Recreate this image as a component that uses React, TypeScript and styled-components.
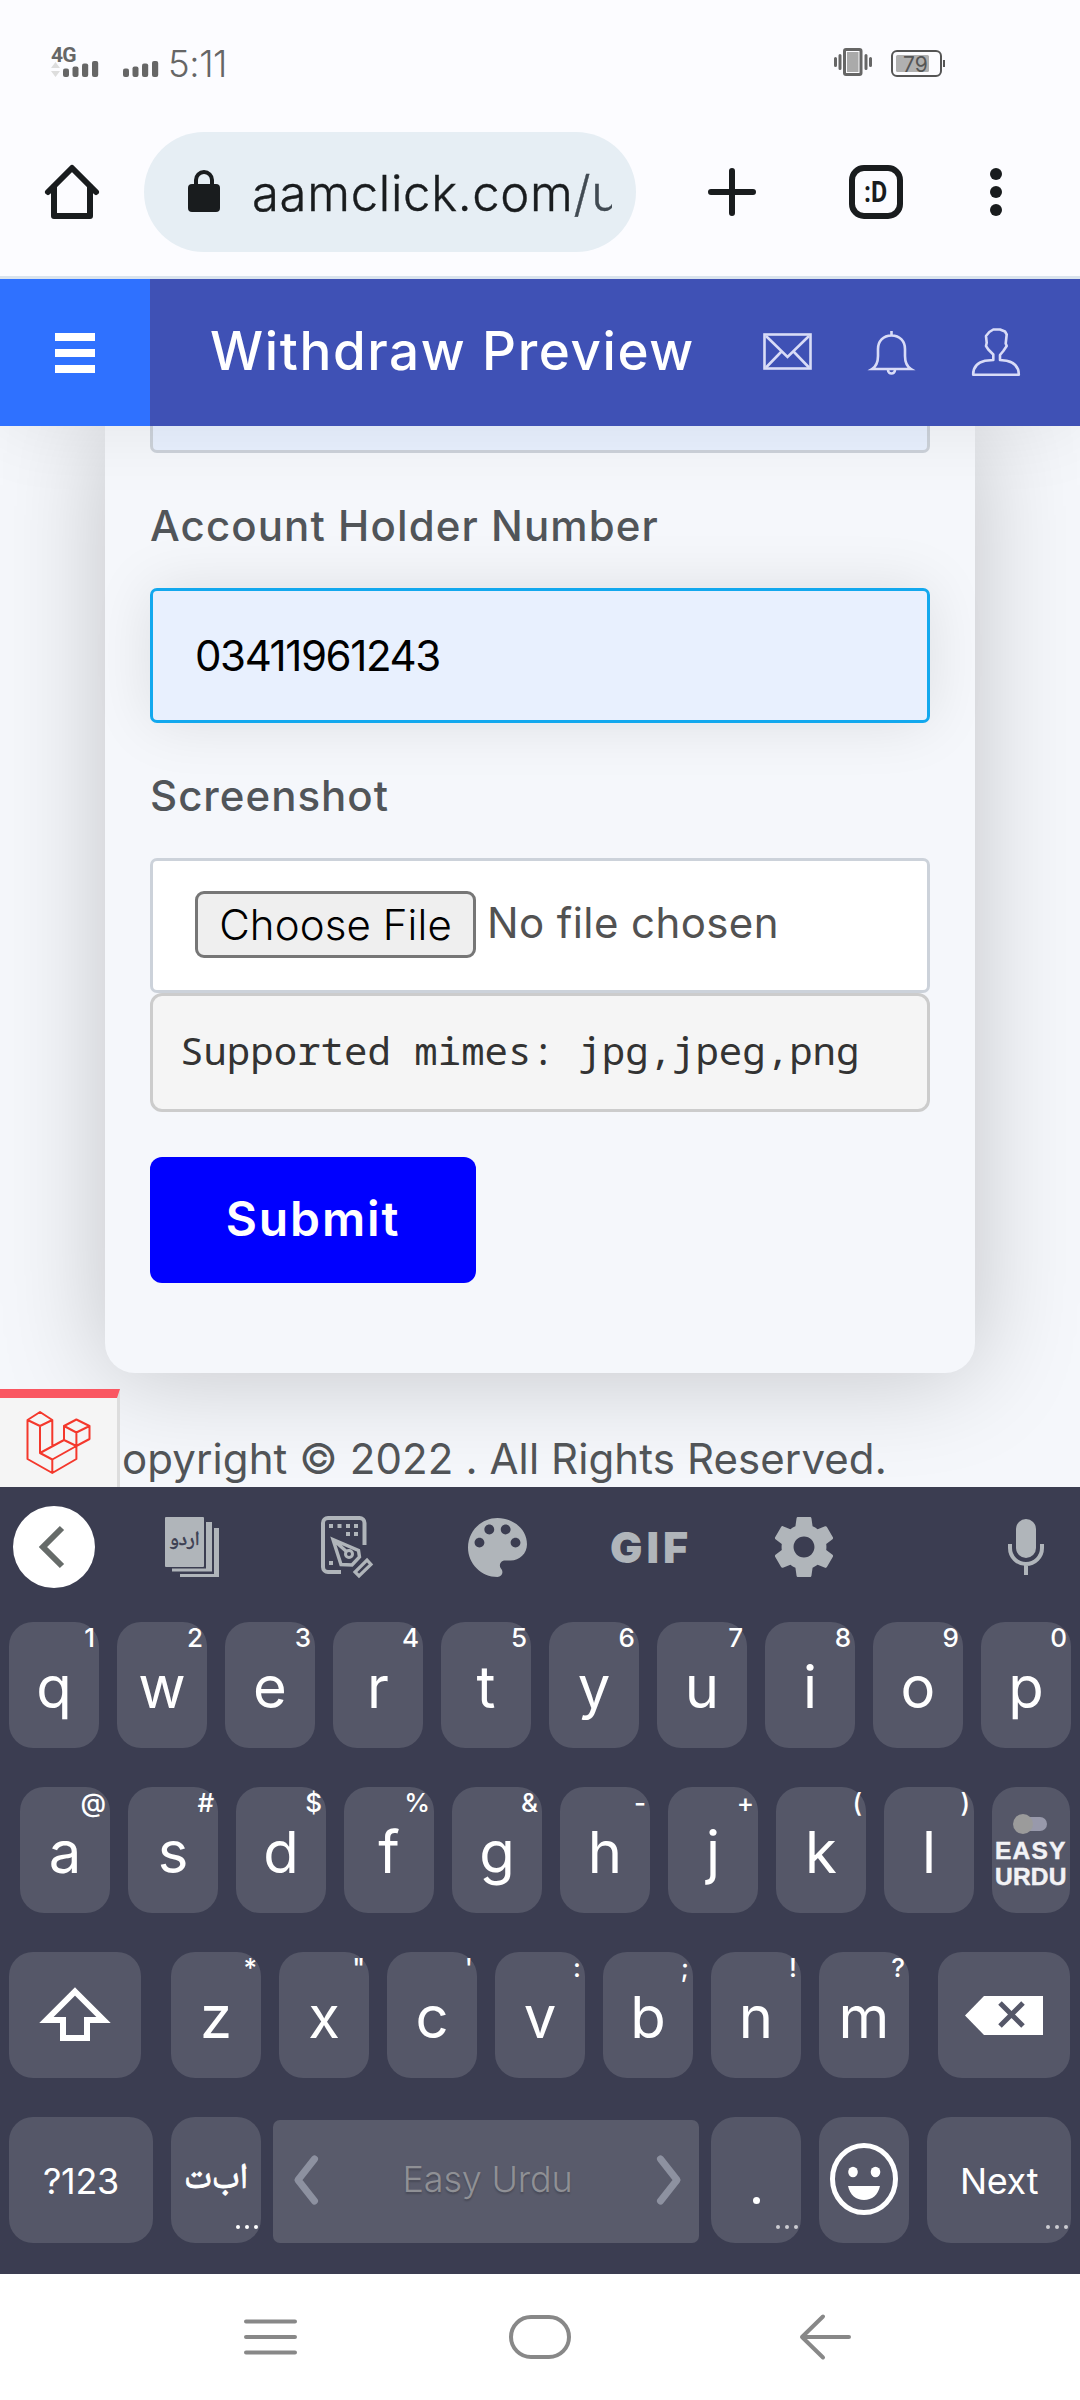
import React from "react";
import styled, { createGlobalStyle } from "styled-components";

const GlobalStyle = createGlobalStyle`
  * { box-sizing: border-box; }
  body { margin: 0; background: #fcfcff; font-family: Inter, "Noto Sans", sans-serif; }
  svg { display: block; flex: none; overflow: visible; }
`;

const sans = `Inter, Roboto, sans-serif`;

const Screen = styled.div`
  width: 1080px;
  height: 2400px;
  display: flex;
  flex-direction: column;
  overflow: hidden;
  font-family: ${sans};
`;

/* ---------- status bar ---------- */
const StatusBar = styled.div`
  height: 126px;
  flex: none;
  display: flex;
  align-items: flex-start;
  padding: 0 134px 0 51px;
  background: #fcfcff;
  color: #666;
  position: relative;
  z-index: 3;
`;
const Network = styled.div`
  width: 47px;
  padding-top: 47px;
  display: flex;
  flex-direction: column;
`;
const NetworkType = styled.span`
  font: 700 21px/17px Roboto, sans-serif;
  letter-spacing: -0.8px;
  height: 14px;
`;
const SecondSim = styled.div`
  margin: 61px 0 0 25px;
`;
const Clock = styled.span`
  margin: 44px auto 0 9px;
  font-size: 36.5px;
  line-height: 40px;
  font-weight: 300;
  letter-spacing: -0.4px;
`;
const Vibrate = styled.div`
  margin: 48px 19px 0 0;
`;
const Battery = styled.div`
  position: relative;
  margin-top: 50px;
  width: 55px;
  height: 27px;
`;
const BatteryLevel = styled.span`
  position: absolute;
  left: 12px;
  top: 3px;
  font-size: 21px;
  line-height: 24px;
  font-weight: 400;
  color: #555;
`;

/* ---------- browser bar ---------- */
const BrowserBar = styled.div`
  height: 153px;
  flex: none;
  display: flex;
  align-items: flex-start;
  padding: 6px 78px 0 45px;
  background: #fcfcff;
  border-bottom: 3px solid #d9e3ed;
  position: relative;
  z-index: 3;
  > svg { margin-top: 33px; }
`;
const Address = styled.div`
  width: 492px;
  height: 120px;
  margin: 0 72px 0 45px;
  border-radius: 60px;
  background: #e6eef4;
  display: flex;
  align-items: center;
  padding: 0 24px 0 44px;
  > svg { margin-top: -2px; }
`;
const Url = styled.div`
  margin: 3px 0 0 32px;
  width: 360px;
  font-size: 49px;
  line-height: 64px;
  font-weight: 300;
  color: #191c1e;
  white-space: nowrap;
  overflow: hidden;
  letter-spacing: 0.7px;
  -webkit-text-stroke: 0.4px currentColor;
  span { color: #414a52; }
`;
const TabCount = styled.div`
  width: 54px;
  height: 54px;
  margin: 33px 87px 0 93px;
  border: 6px solid #191c1e;
  border-radius: 15px;
  display: flex;
  align-items: center;
  justify-content: center;
  color: #191c1e;
  span {
    font: 700 29px/30px Roboto, sans-serif;
    transform: scaleX(0.86);
  }
`;

/* ---------- site header ---------- */
const Header = styled.header`
  height: 147px;
  flex: none;
  display: flex;
  align-items: center;
  background: #3f51b5;
  box-shadow: 0 0 80px rgba(0, 0, 0, 0.08);
  position: relative;
  z-index: 2;
`;
const MenuButton = styled.div`
  width: 150px;
  height: 147px;
  padding: 54px 0 0 55px;
  background: #2f71ff;
  display: flex;
  flex-direction: column;
  gap: 8px;
  i { width: 40px; height: 8px; background: #fff; }
`;
const Title = styled.h1`
  margin: 0 0 4px 60px;
  width: 553px;
  font-size: 53px;
  line-height: 60px;
  font-weight: 500;
  color: #fff;
  letter-spacing: 1.6px;
  white-space: nowrap;
`;
const HeaderIcons = styled.div`
  display: flex;
  align-items: center;
  color: #d9dcf7;
  svg:nth-child(1) { margin-bottom: 2px; }
  svg:nth-child(2) { margin: 0 59px 0 58px; }
  svg:nth-child(3) { margin-bottom: 2px; }
`;

/* ---------- page content ---------- */
const Content = styled.main`
  height: 1061px;
  flex: none;
  background: #f5f7fb;
  overflow: hidden;
  position: relative;
  display: flex;
  flex-direction: column;
`;
const Card = styled.section`
  width: 870px;
  height: 947px;
  flex: none;
  margin-left: 105px;
  padding: 0 45px;
  background: #f5f7fb;
  border-radius: 0 0 30px 30px;
  box-shadow: 0 0 105px rgba(0, 0, 0, 0.21);
  display: flex;
  flex-direction: column;
`;
const Field = styled.div<{ $focus?: boolean; $cut?: boolean; $fill: string }>`
  height: ${(p) => (p.$cut ? 27 : 135)}px;
  flex: none;
  display: flex;
  align-items: center;
  padding: 0 42px;
  border: 3px solid ${(p) => (p.$focus ? "#12a8ee" : "#ccd2da")};
  border-top-width: ${(p) => (p.$cut ? 0 : 3)}px;
  border-radius: ${(p) => (p.$cut ? "0 0 7px 7px" : "7px")};
  background: ${(p) => p.$fill};
  box-shadow: ${(p) => (p.$focus ? "0 0 60px rgba(0, 0, 0, 0.1)" : "none")};
  font-size: 42px;
  line-height: 60px;
  color: #000;
`;
const Label = styled.label<{ $track: number }>`
  height: 135px;
  flex: none;
  padding-top: 43px;
  font-size: 42px;
  line-height: 60px;
  font-weight: 500;
  color: #515559;
  letter-spacing: ${(p) => p.$track}px;
`;
const Digits = styled.span`
  letter-spacing: -1.4px;
`;
const ChooseFile = styled.button`
  width: 281px;
  height: 67px;
  flex: none;
  margin: 0 11px 2px 0;
  padding: 0;
  border: 3px solid #767676;
  border-radius: 9px;
  background: #efefef;
  font: 300 42px/60px ${sans};
  letter-spacing: 0.1px;
  color: #000;
  white-space: nowrap;
`;
const FileName = styled.span`
  color: #525252;
  margin-bottom: 5px;
  font-size: 42px;
  letter-spacing: 0.4px;
  white-space: nowrap;
`;
const Mimes = styled.pre`
  height: 119px;
  flex: none;
  margin: 0 0 45px;
  padding: 25px 27px;
  border: 3px solid #ccc;
  border-radius: 12px;
  background: #f5f5f5;
  color: #333;
  font: 39.05px/58px "Noto Sans Mono", "DejaVu Sans Mono", monospace;
`;
const Submit = styled.button`
  width: 326px;
  height: 126px;
  flex: none;
  padding: 0 0 3px;
  border: 0;
  border-radius: 12px;
  background: #00f;
  color: #fff;
  font: 600 48px/60px ${sans};
  letter-spacing: 1.9px;
`;
const FooterRow = styled.footer`
  display: flex;
  padding-top: 16px;
`;
const DebugBar = styled.div`
  width: 120px;
  height: 98px;
  padding: 14px 0 0 26px;
  border-top: 9px solid #fa5661;
  border-right: 3px solid #ddd;
  background: #f5f5f5;
`;
const Copyright = styled.span`
  margin: 40px 0 0 2px;
  font-size: 42px;
  line-height: 60px;
  letter-spacing: 0.1px;
  color: #515457;
  white-space: nowrap;
`;

/* ---------- keyboard ---------- */
const Keyboard = styled.div`
  height: 787px;
  flex: none;
  background: #3b3d51;
  color: #fff;
  position: relative;
`;
const Tools = styled.div`
  height: 120px;
  margin-bottom: 15px;
  display: flex;
  align-items: center;
  color: #b0b5ba;
`;
const Tool = styled.div<{ $gap: number; $w: number }>`
  width: ${(p) => p.$w}px;
  flex: none;
  margin-left: ${(p) => p.$gap}px;
  position: relative;
`;
const BackCircle = styled.div`
  width: 82px;
  height: 82px;
  border-radius: 50%;
  background: #fff;
  display: flex;
  align-items: center;
  padding-left: 26px;
`;
const DictWord = styled.span`
  position: absolute;
  left: 0;
  top: 7px;
  width: 39px;
  text-align: center;
  font: 400 20px/34px "Noto Naskh Arabic", "DejaVu Sans", sans-serif;
  -webkit-text-stroke: 0.6px currentColor;
  color: #3b3d51;
`;
const Gif = styled.span`
  display: block;
  font: 900 43px/58px ${sans};
  letter-spacing: 4px;
`;
const Row = styled.div<{ $left: number }>`
  height: 126px;
  margin-bottom: 39px;
  padding-left: ${(p) => p.$left}px;
  display: flex;
  align-items: flex-end;
  gap: 18px;
`;
const KeyCap = styled.div<{ $w?: number; $ml?: number; $small?: boolean; $lift?: number }>`
  position: relative;
  width: ${(p) => p.$w ?? 90}px;
  height: 126px;
  flex: none;
  margin-left: ${(p) => p.$ml ?? 0}px;
  padding-top: ${(p) => (p.$small ? 2 : 4)}px;
  padding-bottom: ${(p) => p.$lift ?? 0}px;
  border-radius: 24px;
  background: #555768;
  display: flex;
  flex-direction: column;
  align-items: center;
  justify-content: center;
  font-size: ${(p) => (p.$small ? 36 : 58)}px;
  font-weight: 400;
  line-height: 70px;
  letter-spacing: ${(p) => (p.$small ? -0.3 : 0)}px;
`;
const Hint = styled.span`
  position: absolute;
  right: 4px;
  top: 1px;
  font-size: 26px;
  line-height: 30px;
  font-weight: 500;
`;
const More = styled.div<{ $dim?: boolean }>`
  position: absolute;
  right: 3px;
  bottom: 14px;
  display: flex;
  gap: 5px;
  opacity: ${(p) => (p.$dim ? 0.7 : 1)};
  i { width: 4px; height: 4px; border-radius: 50%; background: #fff; }
`;
const Toggle = styled.div`
  width: 34px;
  height: 20px;
  margin: 2px 0 4px -2px;
  display: flex;
  align-items: center;
  &::before { content: ""; width: 20px; height: 20px; border-radius: 50%; background: #9b9b9b; z-index: 1; }
  &::after { content: ""; width: 22px; height: 14px; margin-left: -8px; border-radius: 0 7px 7px 0; background: #9899ab; }
`;
const Brand = styled.span<{ $track: number }>`
  width: 72px;
  font: 700 24.5px/26px "Liberation Sans", sans-serif;
  letter-spacing: ${(p) => p.$track}px;
  -webkit-text-stroke: 0.5px currentColor;
  white-space: nowrap;
  color: #f2f2f5;
`;
const Arabic = styled.span`
  font: 400 36px/44px "Noto Naskh Arabic", "DejaVu Sans", sans-serif;
  -webkit-text-stroke: 0.9px currentColor;
  margin-top: -3px;
  white-space: nowrap;
`;
const Space = styled.div`
  width: 426px;
  height: 123px;
  margin: 0 -6px;
  padding: 0 18px 3px 21px;
  border-radius: 7px;
  background: #595b6b;
  display: flex;
  align-items: center;
  justify-content: space-between;
  color: #8d91a0;
  span { margin-bottom: 2px; font-size: 36px; line-height: 44px; font-weight: 300; color: #8f9095; text-shadow: 0 2px 2px rgba(0,0,0,.2); letter-spacing: -0.2px; }
`;
const Dot = styled.i`
  width: 7px;
  height: 7px;
  margin-top: 37px;
  border-radius: 50%;
  background: #fff;
`;

/* ---------- navigation bar ---------- */
const NavBar = styled.nav`
  height: 126px;
  flex: none;
  background: #fff;
  display: flex;
  align-items: center;
  gap: 212px;
  padding-left: 244px;
  color: #888;
  svg:last-child { margin-left: 17px; }
`;

const Bars = () => (
  <svg width="36" height="16" fill="currentColor">
    <rect x="0" y="7.5" width="6" height="8.5" rx="2" />
    <rect x="9.5" y="5.5" width="6" height="10.5" rx="2" />
    <rect x="19" y="2.5" width="6.2" height="13.5" rx="2" />
    <rect x="29" y="0" width="6.2" height="16" rx="2" />
  </svg>
);

const LetterKey = ({ ch, hint, ml }: { ch: string; hint: string; ml?: number }) => (
  <KeyCap $ml={ml}>
    {ch}
    <Hint>{hint}</Hint>
  </KeyCap>
);

const Ellipsis = ({ dim }: { dim?: boolean }) => (
  <More $dim={dim}><i /><i /><i /></More>
);

const row1 = [["q", "1"], ["w", "2"], ["e", "3"], ["r", "4"], ["t", "5"], ["y", "6"], ["u", "7"], ["i", "8"], ["o", "9"], ["p", "0"]];
const row2 = [["a", "@"], ["s", "#"], ["d", "$"], ["f", "%"], ["g", "&"], ["h", "-"], ["j", "+"], ["k", "("], ["l", ")"]];
const row3 = [["z", "*"], ["x", '"'], ["c", "'"], ["v", ":"], ["b", ";"], ["n", "!"], ["m", "?"]];

export default function App() {
  return (
    <Screen>
      <GlobalStyle />
      <StatusBar>
        <Network>
          <NetworkType>4G</NetworkType>
          <svg width="47" height="16">
            <path d="M4.5 1 L9 7 H0Z M0 10 H9 L4.5 16Z" fill="#ddd" />
            <g transform="translate(12 0)"><Bars /></g>
          </svg>
        </Network>
        <SecondSim><Bars /></SecondSim>
        <Clock>5:11</Clock>
        <Vibrate>
          <svg width="38" height="28" stroke="#666" fill="none">
            <rect x="10.5" y="1.5" width="16.5" height="25" rx="1.5" strokeWidth="3" />
            <rect x="13" y="4" width="11.5" height="20" fill="#aaa" stroke="none" />
            <path d="M1.5 10.5v7M36.5 10.5v7" strokeWidth="3" strokeLinecap="round" />
            <path d="M6 7.5v13M32 7.5v13" strokeWidth="3" strokeLinecap="round" />
          </svg>
        </Vibrate>
        <Battery>
          <svg width="55" height="27" fill="none">
            <rect x="1" y="1" width="49" height="25" rx="5" stroke="#555" strokeWidth="2" />
            <rect x="5" y="5" width="33" height="17" rx="1.5" fill="#b0b0b0" />
            <path d="M53 10v7" stroke="#555" strokeWidth="2" />
          </svg>
          <BatteryLevel>79</BatteryLevel>
        </Battery>
      </StatusBar>

      <BrowserBar>
        <svg width="54" height="54" fill="none" stroke="#191c1e" strokeWidth="6" strokeLinecap="round" strokeLinejoin="round">
          <path d="M3 27 27 3 51 27" />
          <path d="M9 22V51H45V22" />
        </svg>
        <Address>
          <svg width="32" height="42">
            <rect y="14" width="32" height="28" rx="4" fill="#191c1e" />
            <path d="M8 16V10a8 8 0 0 1 16 0V16" fill="none" stroke="#191c1e" strokeWidth="4" />
          </svg>
          <Url>aamclick.com<span>/u</span></Url>
        </Address>
        <svg width="48" height="54" stroke="#191c1e" strokeWidth="6" strokeLinecap="round">
          <path d="M24 6V48M3 27H45" />
        </svg>
        <TabCount><span>:D</span></TabCount>
        <svg width="12" height="54" fill="#191c1e">
          <circle cx="6" cy="9" r="6" /><circle cx="6" cy="27" r="6" /><circle cx="6" cy="45" r="6" />
        </svg>
      </BrowserBar>

      <Header>
        <MenuButton><i /><i /><i /></MenuButton>
        <Title>Withdraw Preview</Title>
        <HeaderIcons>
          <svg width="49" height="37" fill="none" stroke="currentColor" strokeWidth="2.6">
            <rect x="1.5" y="1.5" width="46" height="34" />
            <path d="M3 3 24.5 24 46 3M3 34.5 18 19M46 34.5 31 19" />
          </svg>
          <svg width="43" height="44" fill="none" stroke="currentColor" strokeWidth="2.6">
            <path d="M21.5 4.5C13 4.5 8 10.5 8 18V25C8 32 6 35.5 2 38H41C37 35.5 35 32 35 25V18C35 10.5 30 4.5 21.5 4.5ZM21.5 0V4M18 39a3.5 3.5 0 0 0 7 0" />
          </svg>
          <svg width="48" height="48" fill="none" stroke="currentColor" strokeWidth="2.6" strokeLinejoin="round">
            <path d="M17.3 4 21.3 1.5H28L33 3.5 34.7 6.5 33.7 15.5 34.7 18 31.3 23 28 27V32L34.7 32.8C42 34.5 47 38 46.8 46.8H1.2C1 38 6 34.5 13 32.8L21.3 32V26.5L16.3 21.5 14 18 14.7 14.7 14 8Z" />
          </svg>
        </HeaderIcons>
      </Header>

      <Content>
        <Card>
          <Field $cut $fill="#e8f0fe" />
          <Label $track={1.1}>Account Holder Number</Label>
          <Field $focus $fill="#e8f0fe"><Digits>03411961243</Digits></Field>
          <Label $track={1}>Screenshot</Label>
          <Field $fill="#fff">
            <ChooseFile>Choose File</ChooseFile>
            <FileName>No file chosen</FileName>
          </Field>
          <Mimes>Supported mimes: jpg,jpeg,png</Mimes>
          <Submit>Submit</Submit>
        </Card>
        <FooterRow>
          <DebugBar>
            <svg width="64" height="61" fill="none" stroke="#f4382c" strokeWidth="2" strokeLinejoin="round">
              <path d="M14 0 26.3 8 14 14 1.5 8ZM1.5 8V47L26.3 61 50.4 47V34L63.5 27V14L50.4 7.5 38 14V28L50.4 34M38 14 50.4 20.5 63.5 14M50.4 20.5V34L26.3 47.5V61M26.3 47.5 14 41V14M14 41 38 28M26.3 8V34.5" />
            </svg>
          </DebugBar>
          <Copyright>opyright © 2022 . All Rights Reserved.</Copyright>
        </FooterRow>
      </Content>

      <Keyboard>
        <Tools>
          <Tool $gap={13} $w={82}>
            <BackCircle>
              <svg width="26" height="42" fill="none" stroke="#666b69" strokeWidth="6"><path d="M23 2 4 21 23 40" /></svg>
            </BackCircle>
          </Tool>
          <Tool $gap={70} $w={54}>
            <svg width="54" height="60" fill="currentColor">
              <rect width="39" height="50" rx="1" />
              <path d="M41 5H47V54.5H7V51.5H41ZM49 11H54V60H15V57H49Z" />
            </svg>
            <DictWord>اردو</DictWord>
          </Tool>
          <Tool $gap={102} $w={51}>
            <svg width="51" height="62" fill="none" stroke="currentColor">
              <path d="M43.5 29V7a5 5 0 0 0-5-5H7a5 5 0 0 0-5 5V51a5 5 0 0 0 5 5H20" strokeWidth="4" />
              <path d="M8 10h4M16.5 10h4M25 10h4M33 10h4M25 18h4M33 18h4M8 47h4" strokeWidth="4" />
              <path d="M12 23.500 37.5 34.500 38.5 41 31 49 20 48.500ZM12 23.5 26 36" strokeWidth="3.4" />
              <circle cx="28" cy="38" r="3.5" strokeWidth="3" />
              <path d="M46 44 50 48.5 38 60 34 56Z" strokeWidth="3.2" />
            </svg>
          </Tool>
          <Tool $gap={96} $w={59}>
            <svg width="59" height="59" viewBox="3 3 18 18" fill="currentColor">
              <path d="M12 3c-4.97 0-9 4.03-9 9s4.03 9 9 9c.83 0 1.5-.67 1.5-1.5 0-.39-.15-.74-.39-1.01-.23-.26-.38-.61-.38-.99 0-.83.67-1.5 1.5-1.5H16c2.76 0 5-2.24 5-5 0-4.42-4.03-8-9-8zm-5.5 9c-.83 0-1.5-.67-1.5-1.5S5.67 9 6.5 9 8 9.67 8 10.5 7.33 12 6.5 12zm3-4C8.67 8 8 7.33 8 6.5S8.67 5 9.5 5s1.5.67 1.5 1.5S10.33 8 9.5 8zm5 0c-.83 0-1.5-.67-1.5-1.5S13.67 5 14.5 5s1.5.67 1.5 1.5S15.33 8 14.5 8zm3 4c-.83 0-1.5-.67-1.5-1.5S16.67 9 17.5 9s1.5.67 1.5 1.5-.67 1.5-1.5 1.5z" />
            </svg>
          </Tool>
          <Tool $gap={83} $w={82}><Gif>GIF</Gif></Tool>
          <Tool $gap={83} $w={58}>
            <svg width="58" height="60" viewBox="2.3 2 19.4 20" fill="currentColor">
              <path d="M19.43 12.98c.04-.32.07-.64.07-.98s-.03-.66-.07-.98l2.11-1.65c.19-.15.24-.42.12-.64l-2-3.46c-.12-.22-.39-.3-.61-.22l-2.49 1c-.52-.4-1.08-.73-1.69-.98l-.38-2.65C14.46 2.18 14.25 2 14 2h-4c-.25 0-.46.18-.49.42l-.38 2.65c-.61.25-1.17.59-1.69.98l-2.49-1c-.23-.09-.49 0-.61.22l-2 3.46c-.13.22-.07.49.12.64l2.11 1.65c-.04.32-.07.65-.07.98s.03.66.07.98l-2.11 1.65c-.19.15-.24.42-.12.64l2 3.46c.12.22.39.3.61.22l2.49-1c.52.4 1.08.73 1.69.98l.38 2.65c.03.24.24.42.49.42h4c.25 0 .46-.18.49-.42l.38-2.65c.61-.25 1.17-.59 1.69-.98l2.49 1c.23.09.49 0 .61-.22l2-3.46c.12-.22.07-.49-.12-.64l-2.11-1.65zM12 15.5c-1.93 0-3.5-1.57-3.5-3.5s1.57-3.5 3.5-3.5 3.5 1.57 3.5 3.5-1.57 3.5-3.5 3.5z" />
            </svg>
          </Tool>
          <Tool $gap={175} $w={36}>
            <svg width="36" height="56">
              <rect x="8" width="20" height="39" rx="10" fill="currentColor" />
              <path d="M2 25V29a16 16 0 0 0 32 0V25M18 46V56" fill="none" stroke="currentColor" strokeWidth="4" />
            </svg>
          </Tool>
        </Tools>

        <Row $left={9}>
          {row1.map(([c, h]) => <LetterKey key={c} ch={c} hint={h} />)}
        </Row>
        <Row $left={20}>
          {row2.map(([c, h]) => <LetterKey key={c} ch={c} hint={h} />)}
          <KeyCap $w={78} $small>
            <Toggle />
            <Brand $track={1.2}>EASY</Brand>
            <Brand $track={0.2}>URDU</Brand>
          </KeyCap>
        </Row>
        <Row $left={9}>
          <KeyCap $w={132} $small $lift={4}>
            <svg width="72" height="54" fill="none" stroke="#fff" strokeWidth="6">
              <path d="M36 4.5 64.5 33H48V51H24V33H7.5Z" />
            </svg>
          </KeyCap>
          {row3.map(([c, h], i) => <LetterKey key={c} ch={c} hint={h} ml={i === 0 ? 12 : 0} />)}
          <KeyCap $w={132} $ml={11} $small $lift={2}>
            <svg width="78" height="39">
              <path d="M0 19.5 19 0H78V39H19Z" fill="#fff" />
              <path d="M35 7 58 30M58 7 35 30" stroke="#555768" strokeWidth="5" />
            </svg>
          </KeyCap>
        </Row>
        <Row $left={9}>
          <KeyCap $w={144} $small>?123</KeyCap>
          <KeyCap>
            <Arabic>اب‌ت</Arabic>
            <Ellipsis />
          </KeyCap>
          <Space>
            <svg width="24" height="50" fill="none" stroke="currentColor" strokeWidth="7" strokeLinecap="round" strokeLinejoin="round"><path d="M20.5 4 4 25 20.5 46" /></svg>
            <span>Easy Urdu</span>
            <svg width="24" height="50" fill="none" stroke="currentColor" strokeWidth="7" strokeLinecap="round" strokeLinejoin="round"><path d="M3.5 4 20 25 3.5 46" /></svg>
          </Space>
          <KeyCap><Dot /><Ellipsis dim /></KeyCap>
          <KeyCap $small $lift={4}>
            <svg width="68" height="72">
              <ellipse cx="34" cy="36" rx="31.5" ry="33.5" fill="none" stroke="#fff" strokeWidth="5" />
              <ellipse cx="23" cy="29" rx="4.8" ry="5.2" fill="#fff" /><ellipse cx="45.5" cy="29" rx="4.8" ry="5.2" fill="#fff" />
              <path d="M18 43H50C48 52 42 57 34 57S20 52 18 43Z" fill="#fff" />
            </svg>
          </KeyCap>
          <KeyCap $w={144} $small>Next<Ellipsis dim /></KeyCap>
        </Row>
      </Keyboard>

      <NavBar>
        <svg width="53" height="36" stroke="currentColor" strokeWidth="4" strokeLinecap="round">
          <path d="M2 2.5H51M2 18H51M2 33.5H51" />
        </svg>
        <svg width="62" height="44" fill="none" stroke="currentColor" strokeWidth="4">
          <rect x="2" y="2" width="58" height="40" rx="20" />
        </svg>
        <svg width="51" height="46" fill="none" stroke="currentColor" strokeWidth="4" strokeLinecap="round" strokeLinejoin="round">
          <path d="M23 2.5 2 23 23 43.5M2 23H49" />
        </svg>
      </NavBar>
    </Screen>
  );
}
